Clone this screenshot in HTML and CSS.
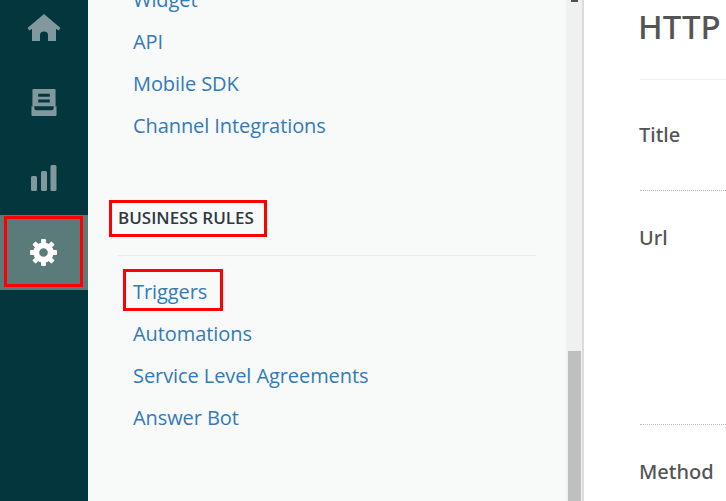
FILE: index.html
```html
<!DOCTYPE html>
<html lang="en">
<head>
<meta charset="utf-8">
<title>Business Rules</title>
<link rel="stylesheet" href="styles.css">
</head>
<body>
<nav class="rail">
  <a class="rail-item">
    <svg class="rail-icon" viewBox="0 0 34 28"><path d="M17 0 L33.5 14 L31.5 16.5 L29 14.8 L29 27 L21 27 L21 21 Q21 17.500 17 17.500 Q13 17.500 13 21 L13 27 L5 27 L5 14.800 L2.500 16.500 L0.500 14 Z"/></svg>
  </a>
  <a class="rail-item">
    <svg class="rail-icon rail-icon-tall" viewBox="0 0 26 28"><path fill-rule="evenodd" d="M2 0 H24 Q25 0 25 1 V18 H1 V1 Q1 0 2 0 Z M7 5 V8 H19 V5 Z M7 11 V14 H19 V11 Z"/><path d="M0 18 H3 V20 Q3 22 5 22 H21 Q23 22 23 20 V18 H26 V27 Q26 28 25 28 H1 Q0 28 0 27 Z"/></svg>
  </a>
  <a class="rail-item">
    <svg class="rail-icon" viewBox="0 0 26 26"><rect x="0" y="11" width="6" height="15" rx="1.500"/><rect x="10" y="6" width="6" height="20" rx="1.500"/><rect x="19.500" y="0" width="6" height="26" rx="1.500"/></svg>
  </a>
  <a class="rail-item active">
    <span class="box box-gear"></span>
    <svg class="gear" viewBox="0 0 28 28">
      <circle class="gear-ring" cx="14" cy="14" r="7.500"/>
      <rect x="11.500" y="0" width="5" height="6" rx="1"/>
      <rect x="11.500" y="0" width="5" height="6" rx="1" transform="rotate(45 14 14)"/>
      <rect x="11.500" y="0" width="5" height="6" rx="1" transform="rotate(90 14 14)"/>
      <rect x="11.500" y="0" width="5" height="6" rx="1" transform="rotate(135 14 14)"/>
      <rect x="11.500" y="0" width="5" height="6" rx="1" transform="rotate(180 14 14)"/>
      <rect x="11.500" y="0" width="5" height="6" rx="1" transform="rotate(225 14 14)"/>
      <rect x="11.500" y="0" width="5" height="6" rx="1" transform="rotate(270 14 14)"/>
      <rect x="11.500" y="0" width="5" height="6" rx="1" transform="rotate(315 14 14)"/>
    </svg>
  </a>
</nav>

<aside class="panel">
  <div class="panel-scroll">
    <ul class="links links-top">
      <li><a>Widget</a></li>
      <li><a>API</a></li>
      <li><a>Mobile SDK</a></li>
      <li><a>Channel Integrations</a></li>
    </ul>
    <h3 class="section-title"><span class="box box-title"></span>BUSINESS RULES</h3>
    <ul class="links">
      <li class="boxed"><span class="box box-link"></span><a>Triggers</a></li>
      <li><a>Automations</a></li>
      <li><a>Service Level Agreements</a></li>
      <li><a>Answer Bot</a></li>
    </ul>
  </div>
  <div class="scrollbar"><div class="scrollbar-up"></div><div class="scrollbar-thumb"></div></div>
</aside>

<main class="main">
  <h1 class="heading">HTTP</h1>
  <div class="field field-title">Title</div>
  <div class="field field-url">Url</div>
  <div class="field field-method">Method</div>
</main>
</body>
</html>
```

FILE: styles.css
```css
* { box-sizing: border-box; }
html, body { height: 100%; }
body {
  margin: 0;
  display: flex;
  overflow: hidden;
  background: #fff;
  font-family: "Open Sans", "Noto Sans", sans-serif;
}
.rail {
  width: 88px;
  flex: none;
  background: #03363d;
  margin-top: -20px;
  padding-top: 10px;
  height: 521px;
}
.rail-item {
  position: relative;
  display: flex;
  align-items: center;
  justify-content: center;
  height: 75px;
}
.rail-icon { width: 26px; height: 26px; fill: #81999e; }
.rail-icon-tall { height: 27px; }
.rail-item:first-child .rail-icon { width: 34px; height: 28px; }
.rail-item.active { background: #5b7b7b; }
.gear { width: 27px; height: 27px; fill: #fff; margin-left: -1px; }
.gear-ring { fill: none; stroke: #fff; stroke-width: 6px; }
.box {
  position: absolute;
  border: 3px solid #ff0000;
}
.box-gear { left: 4px; top: 1px; width: 79px; height: 71px; }
.box-title { left: -9px; top: -7px; width: 158px; height: 37px; }
.box-link { left: -10px; top: -2px; width: 100px; height: 42px; }
.panel {
  width: 496px;
  flex: none;
  display: flex;
  background: #f8f9f9;
  border-right: 2px solid #d8dcde;
}
.panel-scroll {
  flex: 1;
  min-width: 0;
  overflow: hidden;
  padding-left: 30px;
}
.links {
  list-style: none;
  margin: 0;
  padding: 0 0 0 15px;
  font-size: 20px;
  line-height: 42px;
  letter-spacing: -0.08px;
  color: #337ab7;
}
.links-top { margin-top: -21px; }
.boxed { position: relative; }
.section-title {
  position: relative;
  margin: 60px 30px 15px 0;
  padding: 0 0 26px 0;
  border-bottom: 1px solid #e9ebed;
  font-size: 17px;
  line-height: 22px;
  font-weight: 600;
  color: #2f3941;
}
.scrollbar {
  width: 16px;
  flex: none;
  position: relative;
  background: #f0f0f0;
}
.scrollbar-up {
  width: 7px;
  height: 2px;
  margin: 0 auto;
  background: #505050;
}
.scrollbar-thumb {
  position: absolute;
  left: 2px;
  right: 1px;
  top: 351px;
  bottom: 0;
  background: #bfbfbf;
}
.main {
  flex: 1;
  min-width: 0;
  padding-left: 56px;
  color: #555;
  font-family: "Noto Sans", "Open Sans", sans-serif;
  font-size: 20px;
  font-weight: 500;
}
.heading {
  margin: 0;
  height: 80px;
  padding-top: 5px;
  border-bottom: 1px solid #eee;
  font-size: 33px;
  line-height: 44px;
  font-weight: 500;
  text-indent: -2px;
}
.field { border-bottom: 1px dotted #bbb; line-height: 28px; text-indent: -1px; }
.field-title { height: 111px; padding-top: 41px; }
.field-url { height: 234px; padding-top: 33px; }
.field-method { border: 0; padding-top: 33px; }
```
